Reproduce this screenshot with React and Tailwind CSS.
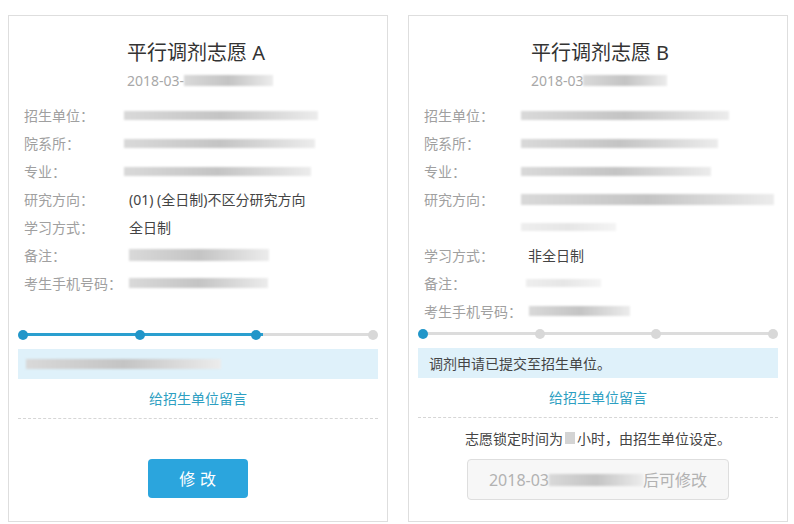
import React from 'react';

const FONT = "font-['Noto_Sans','Noto_Sans_CJK_SC',sans-serif]";

// 模糊遮挡条
const Blur = ({ w, h = 9, light = false, className = '' }) => (
  <div
    className={`${light ? 'bg-linear-to-r from-[#eeeeee] via-[#e6e6e6] to-[#f4f4f4]' : 'bg-linear-to-r from-[#d9d9d9] via-[#c4c4c4] to-[#ececec]'} blur-[1px] shrink-0 ${className}`}
    style={{ width: w, height: h }}
  />
);

const Row = ({ label, labelW, children, tall = false }) => (
  <div className={`flex ${tall ? 'h-[56px]' : 'h-[28px]'}`}>
    <div className="h-[28px] flex items-center text-[14px] text-[#a0a0a0] shrink-0 whitespace-nowrap" style={{ width: labelW }}>
      {label}
    </div>
    <div className="flex flex-col">{children}</div>
  </div>
);

const Cell = ({ children }) => <div className="h-[28px] flex items-center">{children}</div>;

const Steps = ({ done }) => (
  <div className="relative h-[10px] mx-[9px]">
    <div className="absolute left-[5px] right-[5px] top-[3px] h-[3px] bg-[#dcdcdc]" />
    {done > 1 && (
      <div
        className="absolute left-[5px] top-[3px] h-[3px] bg-[#2a9fcf]"
        style={{ width: `${((done - 1) / 3) * 100}%` }}
      />
    )}
    <div className="relative flex justify-between">
      {[1, 2, 3, 4].map((i) => (
        <div
          key={i}
          className={`w-[10px] h-[10px] rounded-full ${i <= done ? 'bg-[#2196c9]' : 'bg-[#d8d8d8]'}`}
        />
      ))}
    </div>
  </div>
);

const Header = ({ title, dateSuffix, blurW }) => (
  <div className="flex justify-center pt-[23px] pl-[4px]">
    <div>
      <div className="h-[28px] flex items-center text-[20px] text-[#333] leading-none">{title}</div>
      <div className="h-[20px] mt-[3px] flex items-center text-[14px] text-[#a8a8a8]">
        <span>2018-03{dateSuffix}</span>
        <Blur w={blurW} h={11} />
      </div>
    </div>
  </div>
);

const CardA = () => (
  <div className="w-[380px] h-[507px] border border-[#dedede] bg-white shrink-0">
    <Header title="平行调剂志愿 A" dateSuffix="-" blurW={89} />
    <div className="mt-[11px] pl-[15px]">
      <Row label="招生单位：" labelW={100}><Cell><Blur w={194} /></Cell></Row>
      <Row label="院系所：" labelW={100}><Cell><Blur w={191} /></Cell></Row>
      <Row label="专业：" labelW={100}><Cell><Blur w={187} /></Cell></Row>
      <Row label="研究方向：" labelW={100}><Cell><span className="pl-[5px] text-[14px] text-[#444]">(01) (全日制)不区分研究方向</span></Cell></Row>
      <Row label="学习方式：" labelW={100}><Cell><span className="pl-[5px] text-[14px] text-[#444]">全日制</span></Cell></Row>
      <Row label="备注：" labelW={100}><Cell><Blur w={140} h={12} className="ml-[5px]" /></Cell></Row>
      <Row label="考生手机号码：" labelW={100}><Cell><Blur w={139} h={10} className="ml-[5px]" /></Cell></Row>
    </div>
    <div className="mt-[33px]"><Steps done={3} /></div>
    <div className="mt-[9px] mx-[9px] h-[30px] bg-[#dff1fa] flex items-center pl-[8px]">
      <Blur w={195} h={10} />
    </div>
    <div className="mx-[9px] h-[40px] flex items-center justify-center text-[14px] text-[#2e9fc2] border-b border-dashed border-[#d6d6d6]">
      给招生单位留言
    </div>
    <div className="flex justify-center mt-[40px]">
      <div className="w-[100px] h-[39px] rounded-[4px] bg-[#2ba5dd] text-white text-[16px] tracking-[0.3em] flex items-center justify-center pl-[4px]">
        修改
      </div>
    </div>
  </div>
);

const CardB = () => (
  <div className="w-[380px] h-[507px] border border-[#dedede] bg-white shrink-0">
    <Header title="平行调剂志愿 B" dateSuffix="" blurW={84} />
    <div className="mt-[11px] pl-[15px]">
      <Row label="招生单位：" labelW={97}><Cell><Blur w={208} /></Cell></Row>
      <Row label="院系所：" labelW={97}><Cell><Blur w={197} /></Cell></Row>
      <Row label="专业：" labelW={97}><Cell><Blur w={190} /></Cell></Row>
      <Row label="研究方向：" labelW={97} tall>
        <Cell><Blur w={253} h={11} /></Cell>
        <Cell><Blur w={95} h={8} light /></Cell>
      </Row>
      <Row label="学习方式：" labelW={97}><Cell><span className="pl-[7px] text-[14px] text-[#444]">非全日制</span></Cell></Row>
      <Row label="备注：" labelW={97}><Cell><Blur w={75} h={8} light className="ml-[5px]" /></Cell></Row>
      <Row label="考生手机号码：" labelW={97}><Cell><Blur w={101} h={10} className="ml-[8px]" /></Cell></Row>
    </div>
    <div className="mt-[4px]"><Steps done={1} /></div>
    <div className="mt-[9px] mx-[9px] h-[30px] bg-[#dff1fa] flex items-center pl-[11px] text-[14px] text-[#444]">
      调剂申请已提交至招生单位。
    </div>
    <div className="mx-[9px] h-[40px] flex items-center justify-center text-[14px] text-[#2e9fc2] border-b border-dashed border-[#d6d6d6]">
      给招生单位留言
    </div>
    <div className="h-[40px] flex items-center justify-center text-[14px] text-[#444]">
      志愿锁定时间为
      <span className="inline-block w-[10px] h-[12px] bg-[#d4d4d4] blur-[0.5px] mx-[2px]" />
      小时，由招生单位设定。
    </div>
    <div className="flex justify-center mt-[1px]">
      <div className="w-[262px] h-[41px] rounded-[4px] bg-[#f7f7f7] border border-[#dedede] text-[#b2b2b2] text-[16px] flex items-center justify-center">
        <span>2018-03</span>
        <Blur w={94} h={12} />
        <span>后可修改</span>
      </div>
    </div>
  </div>
);

export default function App() {
  return (
    <div className={`w-[794px] h-[524px] bg-white flex gap-[20px] pl-[8px] pt-[15px] ${FONT}`}>
      <CardA />
      <CardB />
    </div>
  );
}
